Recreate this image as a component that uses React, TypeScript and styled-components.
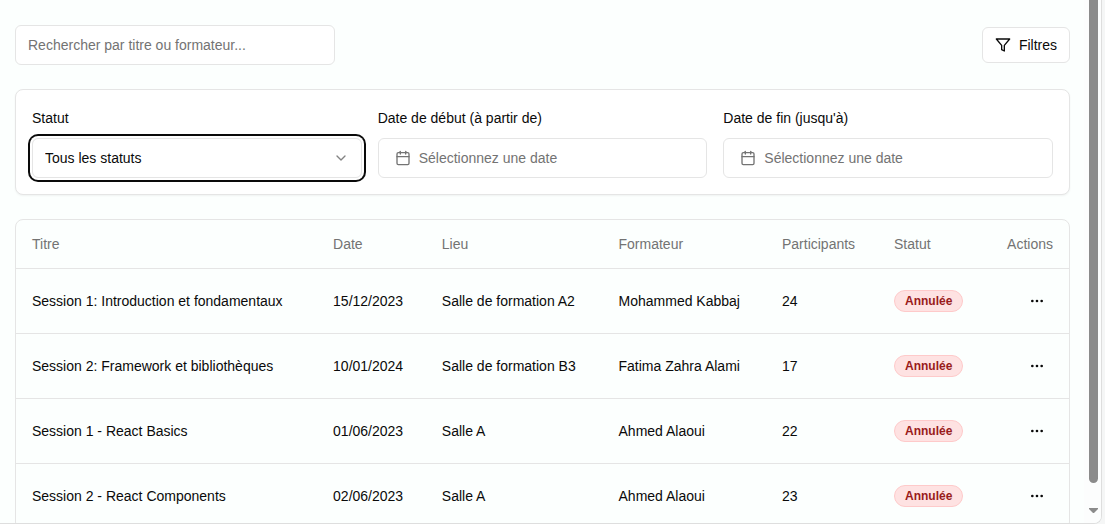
import React from "react";
import styled, { createGlobalStyle } from "styled-components";
import { Calendar, ChevronDown, Ellipsis } from "lucide-react";

const GlobalStyle = createGlobalStyle`
  *, *::before, *::after { box-sizing: border-box; }
  body {
    margin: 0;
    background: #f5f6f6;
    color: #0a0a0a;
    font: 14px/20px "Liberation Sans", Arial, sans-serif;
  }
  button, input, select { font: inherit; color: inherit; margin: 0; }
`;

const Frame = styled.div`
  display: flex;
  height: 100vh;
  margin-right: 3px;
  overflow: hidden;
  background: #fcfffe;
  border: solid #dedede;
  border-width: 0 1px 1px 0;
  border-bottom-right-radius: 8px;
`;

const Content = styled.main`
  flex: 1;
  min-width: 0;
  display: flex;
  flex-direction: column;
  gap: 24px;
  padding: 25px 14px 0 15px;
  overflow: hidden;
`;

const Scrollbar = styled.div`
  flex: none;
  width: 17px;
  display: flex;
  flex-direction: column;
  align-items: center;
  gap: 25px;
  padding: 0 0 10px 2px;
  background: #fcfdfd;
`;

const Thumb = styled.div`
  flex: 1;
  width: 9px;
  background: #8b8b8b;
  border-radius: 0 0 5px 5px;
`;

const Toolbar = styled.div`
  display: flex;
  align-items: center;
  justify-content: space-between;
`;

const SearchInput = styled.input`
  width: 320px;
  height: 40px;
  padding: 0 12px;
  background: #fff;
  border: 1px solid #e5e5e5;
  border-radius: 6px;
  &::placeholder { color: #737373; opacity: 1; }
`;

const FilterButton = styled.button`
  display: flex;
  align-items: center;
  gap: 8px;
  height: 36px;
  padding: 0 12px;
  background: #fff;
  border: 1px solid #e5e5e5;
  border-radius: 6px;
`;

const FilterCard = styled.section`
  display: grid;
  grid-template-columns: repeat(3, minmax(0, 1fr));
  gap: 16px;
  padding: 16px;
  background: #fff;
  border: 1px solid #e5e5e5;
  border-radius: 8px;
  box-shadow: 0 1px 2px rgba(0, 0, 0, 0.05);
`;

const Field = styled.div`
  display: flex;
  flex-direction: column;
  gap: 8px;
`;

const Label = styled.label`
  line-height: 24px;
`;

const SelectBox = styled.div`
  display: grid;
  align-items: center;
  > * { grid-area: 1 / 1; }
  > svg {
    justify-self: end;
    margin-right: 13px;
    opacity: 0.5;
    pointer-events: none;
  }
`;

const Select = styled.select`
  appearance: none;
  width: 100%;
  height: 40px;
  padding: 0 12px;
  background: #fff;
  border: 1px solid #e5e5e5;
  border-radius: 6px;
  outline: none;
  box-shadow: 0 0 0 2px #fff, 0 0 0 4px #0a0a0a;
`;

const DateButton = styled.button`
  display: flex;
  align-items: center;
  gap: 8px;
  height: 40px;
  padding: 0 16px;
  background: #fff;
  border: 1px solid #e5e5e5;
  border-radius: 6px;
  color: #737373;
`;

const TableCard = styled.div`
  flex: none;
  border: 1px solid #e5e5e5;
  border-radius: 8px;
`;

const Table = styled.table`
  width: 100%;
  border-collapse: collapse;
  tr { border-bottom: 1px solid #e5e5e5; }
`;

const HeadCell = styled.th<{ $end?: boolean }>`
  height: 48px;
  padding: 0 16px;
  color: #737373;
  font-weight: 400;
  text-align: ${(p) => (p.$end ? "right" : "left")};
`;

const Cell = styled.td<{ $end?: boolean }>`
  padding: 16px;
  text-align: ${(p) => (p.$end ? "right" : "left")};
`;

const Badge = styled.span`
  display: inline-flex;
  padding: 2px 10px;
  background: #fee2e2;
  border: 1px solid #fecaca;
  border-radius: 11px;
  color: #991b1b;
  font-size: 12px;
  font-weight: 700;
  line-height: 16px;
`;

const IconButton = styled.button`
  display: inline-flex;
  align-items: center;
  justify-content: center;
  width: 32px;
  height: 32px;
  padding: 0;
  background: transparent;
  border: 0;
  border-radius: 6px;
  vertical-align: top;
`;

const sessions = [
  ["Session 1: Introduction et fondamentaux", "15/12/2023", "Salle de formation A2", "Mohammed Kabbaj", 24],
  ["Session 2: Framework et bibliothèques", "10/01/2024", "Salle de formation B3", "Fatima Zahra Alami", 17],
  ["Session 1 - React Basics", "01/06/2023", "Salle A", "Ahmed Alaoui", 22],
  ["Session 2 - React Components", "02/06/2023", "Salle A", "Ahmed Alaoui", 23],
];

const columns = ["Titre", "Date", "Lieu", "Formateur", "Participants", "Statut"];

const FilterIcon = () => (
  <svg width="16" height="16" viewBox="0 0 24 24" fill="none" stroke="currentColor" strokeWidth="2" strokeLinecap="round" strokeLinejoin="round" aria-hidden="true">
    <polygon points="22 3 2 3 10 12.46 10 19 14 21 14 12.46 22 3" />
  </svg>
);

export default function App() {
  return (
    <>
      <GlobalStyle />
      <Frame>
        <Content>
          <Toolbar>
            <SearchInput type="text" aria-label="Rechercher" placeholder="Rechercher par titre ou formateur..." />
            <FilterButton type="button">
              <FilterIcon />
              Filtres
            </FilterButton>
          </Toolbar>

          <FilterCard>
            <Field>
              <Label htmlFor="statut">Statut</Label>
              <SelectBox>
                <Select id="statut" defaultValue="all">
                  <option value="all">Tous les statuts</option>
                </Select>
                <ChevronDown size={16} />
              </SelectBox>
            </Field>
            <Field>
              <Label htmlFor="debut">Date de début (à partir de)</Label>
              <DateButton id="debut" type="button">
                <Calendar size={16} />
                Sélectionnez une date
              </DateButton>
            </Field>
            <Field>
              <Label htmlFor="fin">Date de fin (jusqu'à)</Label>
              <DateButton id="fin" type="button">
                <Calendar size={16} />
                Sélectionnez une date
              </DateButton>
            </Field>
          </FilterCard>

          <TableCard>
            <Table>
              <thead>
                <tr>
                  {columns.map((c) => (
                    <HeadCell key={c} scope="col">{c}</HeadCell>
                  ))}
                  <HeadCell scope="col" $end>Actions</HeadCell>
                </tr>
              </thead>
              <tbody>
                {sessions.map((row) => (
                  <tr key={row[0]}>
                    {row.map((value, i) => (
                      <Cell key={i}>{value}</Cell>
                    ))}
                    <Cell><Badge>Annulée</Badge></Cell>
                    <Cell $end>
                      <IconButton type="button" aria-label="Actions">
                        <Ellipsis size={16} />
                      </IconButton>
                    </Cell>
                  </tr>
                ))}
              </tbody>
            </Table>
          </TableCard>
        </Content>
        <Scrollbar aria-hidden="true">
          <Thumb />
          <svg width="9" height="5" viewBox="0 0 9 5">
            <path d="M0 0h9v1L5 5H4L0 1z" fill="#8b8b8b" />
          </svg>
        </Scrollbar>
      </Frame>
    </>
  );
}
